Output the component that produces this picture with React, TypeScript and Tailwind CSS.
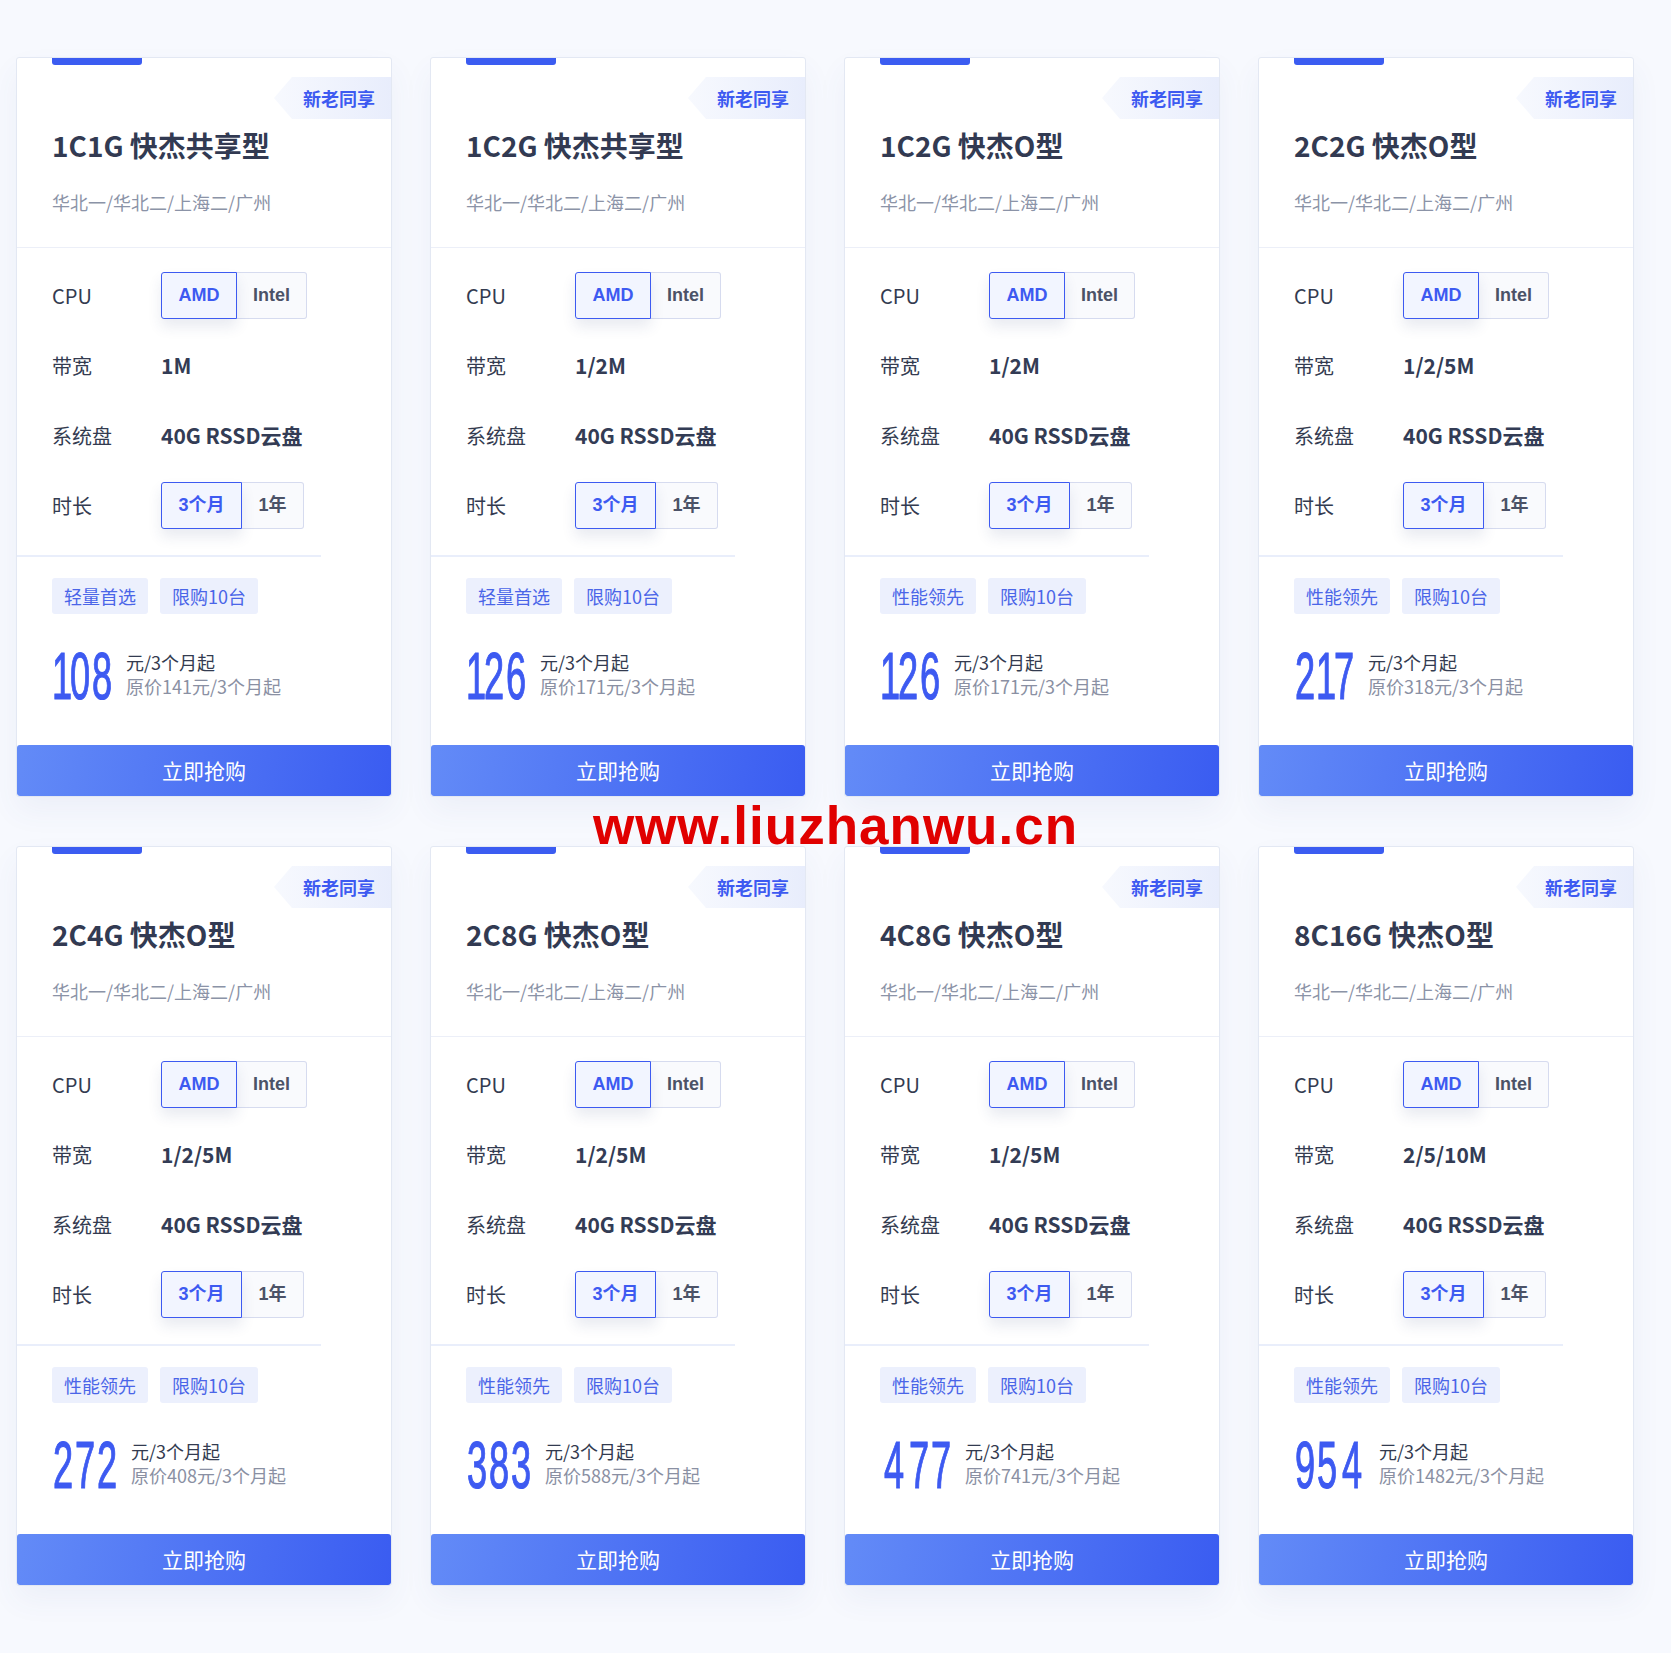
import React from "react";

type Plan = {
  title: string;
  bw: string;
  tags: string[];
  price: string;
  orig: string;
};

const plans: Plan[] = [
  { title: "1C1G 快杰共享型", bw: "1M", tags: ["轻量首选", "限购10台"], price: "108", orig: "原价141元/3个月起" },
  { title: "1C2G 快杰共享型", bw: "1/2M", tags: ["轻量首选", "限购10台"], price: "126", orig: "原价171元/3个月起" },
  { title: "1C2G 快杰O型", bw: "1/2M", tags: ["性能领先", "限购10台"], price: "126", orig: "原价171元/3个月起" },
  { title: "2C2G 快杰O型", bw: "1/2/5M", tags: ["性能领先", "限购10台"], price: "217", orig: "原价318元/3个月起" },
  { title: "2C4G 快杰O型", bw: "1/2/5M", tags: ["性能领先", "限购10台"], price: "272", orig: "原价408元/3个月起" },
  { title: "2C8G 快杰O型", bw: "1/2/5M", tags: ["性能领先", "限购10台"], price: "383", orig: "原价588元/3个月起" },
  { title: "4C8G 快杰O型", bw: "1/2/5M", tags: ["性能领先", "限购10台"], price: "477", orig: "原价741元/3个月起" },
  { title: "8C16G 快杰O型", bw: "2/5/10M", tags: ["性能领先", "限购10台"], price: "954", orig: "原价1482元/3个月起" },
];

// the price uses a squeezed font: digits are 67px wide-set, scaled to 0.54
const SCALE = 0.54;
const ADV = 0.556 * 67;
const digitW = (d: string) => (d === "1" ? 17 : d === "4" ? 28 : 22);

function Price({ value }: { value: string }) {
  const digits = value.split("");
  const total = digits.reduce((s, d) => s + digitW(d), 0);
  return (
    <div style={{ width: total + 13 }} className="h-[48px] shrink-0 whitespace-nowrap">
      <span className="inline-block origin-left scale-x-[0.54] font-['Liberation_Sans',sans-serif] text-[67px] leading-[48px] text-[#3d5af1] [-webkit-text-stroke:1.2px_#3d5af1]">
        {digits.map((d, i) => {
          const extra = digitW(d) / SCALE - ADV;
          const ml = d === "1" ? 0 : extra / 2;
          return (
            <span key={i} style={{ marginLeft: ml, letterSpacing: extra - ml }}>
              {d}
            </span>
          );
        })}
      </span>
    </div>
  );
}

function Segment({ items, widths }: { items: string[]; widths: number[] }) {
  return (
    <div className="flex h-[47px] font-['Liberation_Sans','Noto_Sans_CJK_SC',sans-serif]">
      {items.map((t, i) =>
        i === 0 ? (
          <div
            key={t}
            style={{ width: widths[i] }}
            className="relative z-10 flex items-center justify-center rounded-l-[3px] border border-[#3d5af1] bg-[#f2f5ff] text-[18px] font-bold text-[#3d5af1] shadow-[0_8px_14px_rgba(40,60,120,0.10)]"
          >
            {t}
          </div>
        ) : (
          <div
            key={t}
            style={{ width: widths[i] }}
            className="flex items-center justify-center rounded-r-[3px] border border-l-0 border-[#d6dbef] bg-[#f9fafd] text-[18px] font-bold text-[#4b5267]"
          >
            {t}
          </div>
        )
      )}
    </div>
  );
}

function Row({ label, children }: { label: string; children: React.ReactNode }) {
  return (
    <div className="flex h-[47px] items-center">
      <div className="w-[109px] text-[20px] leading-7 text-[#333b50]">{label}</div>
      {children}
    </div>
  );
}

function Card({ p }: { p: Plan }) {
  return (
    <div className="relative flex h-[740px] w-[376px] flex-col overflow-hidden rounded-[3px] border border-[#e3e8f3] bg-white shadow-[0_14px_30px_rgba(60,80,150,0.06)]">
      <div className="absolute left-[35px] top-0 h-[7px] w-[90px] rounded-b-[3px] bg-[#3b5cf1]" />
      <div className="absolute right-0 top-[19px] flex h-[42px] w-[117px] items-center bg-[linear-gradient(90deg,#f7f9fe,#e8edfc)] pl-[29px] text-[18px] font-bold text-[#3d5af1] [clip-path:polygon(18px_0,100%_0,100%_100%,18px_100%,0_50%)]">
        新老同享
      </div>

      <div className="border-b border-[#eceff8] px-[35px] pb-[33px] pt-[69px]">
        <div className="text-[28px] font-bold leading-9 text-[#323a52]">{p.title}</div>
        <div className="mt-[27px] text-[18px] leading-6 text-[#8b93a7]">华北一/华北二/上海二/广州</div>
      </div>

      <div className="flex flex-col gap-[23px] px-[35px] pt-[24px]">
        <Row label="CPU">
          <Segment items={["AMD", "Intel"]} widths={[76, 70]} />
        </Row>
        <Row label="带宽">
          <div className="text-[21px] font-bold text-[#333c55]">{p.bw}</div>
        </Row>
        <Row label="系统盘">
          <div className="text-[21px] font-bold text-[#333c55]">40G RSSD云盘</div>
        </Row>
        <Row label="时长">
          <Segment items={["3个月", "1年"]} widths={[81, 62]} />
        </Row>
      </div>

      <div className="mt-[26px] h-[2px] w-[304px] bg-[#e9eefb]" />

      <div className="ml-[35px] mt-[21px] flex gap-3">
        {p.tags.map((t) => (
          <div key={t} className="flex h-[36px] items-center rounded-[3px] bg-[#ecf0fd] px-3 text-[18px] text-[#4a65e8]">
            {t}
          </div>
        ))}
      </div>

      <div className="ml-[35px] mt-[38px] flex h-[48px] items-center">
        <Price value={p.price} />
        <div className="-mt-[4px] flex flex-col text-[18px] leading-6">
          <span className="text-[#333b50]">元/3个月起</span>
          <span className="text-[#8a90a3]">{p.orig}</span>
        </div>
      </div>

      <button className="mt-auto flex h-[51px] w-full items-center justify-center rounded-[3px] bg-[linear-gradient(100deg,#638bf7,#3a5cf1)] text-[21px] text-white">
        立即抢购
      </button>
    </div>
  );
}

export default function App() {
  return (
    <div className="relative min-h-[1653px] bg-[#f7f9fe] font-['Noto_Sans_CJK_SC',sans-serif]">
      <div className="grid grid-cols-[repeat(4,376px)] gap-x-[38px] gap-y-[49px] px-[16px] pb-[67px] pt-[57px]">
        {plans.map((p, i) => (
          <Card key={i} p={p} />
        ))}
      </div>
      <div className="pointer-events-none absolute left-0 right-0 top-[799px] text-center font-['Liberation_Sans',sans-serif] text-[53px] font-bold leading-[53px] tracking-[1px] text-[#e00000]">
        www.liuzhanwu.cn
      </div>
    </div>
  );
}
